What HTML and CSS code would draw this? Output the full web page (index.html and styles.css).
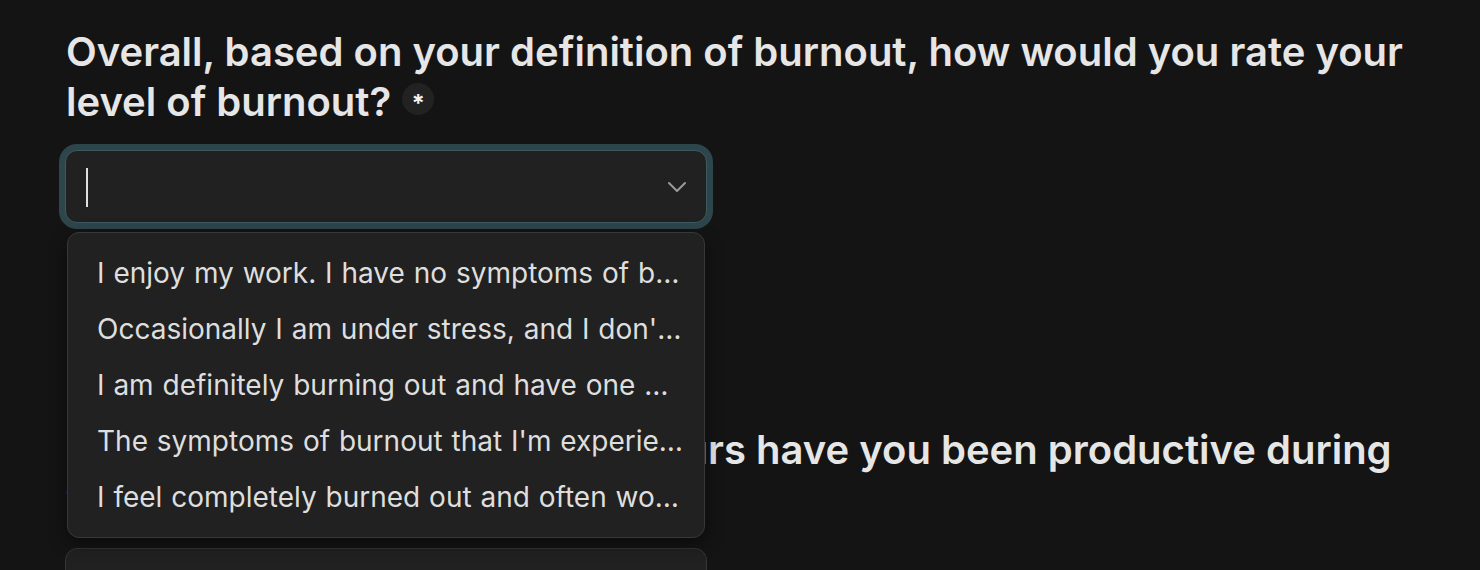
FILE: index.html
```html
<!DOCTYPE html>
<html lang="en">
<head>
    <meta charset="UTF-8">
    <title>Burnout survey</title>
    <link rel="stylesheet" href="styles.css">
</head>
<body>
<div id="form">
    <div class="question">
        <h3>Overall, based on your definition of burnout, how would you rate your level of burnout?<span class="required">*</span></h3>
        <div class="select focused">
            <span class="caret"></span>
            <svg class="chevron" width="20" height="12" viewBox="0 0 20 12">
                <path d="M2 2 L10 10 L18 2" fill="none" stroke="#9a9a9a" stroke-width="2" stroke-linecap="round" stroke-linejoin="round"/>
            </svg>
            <ul class="menu">
                <li>I enjoy my work. I have no symptoms of burnout.</li>
                <li>Occasionally I am under stress, and I don't always have as much energy as I once did, but I don't feel burned out.</li>
                <li>I am definitely burning out and have one or more symptoms of burnout, such as physical and emotional exhaustion.</li>
                <li>The symptoms of burnout that I'm experiencing won't go away. I think about frustration at work a lot.</li>
                <li>I feel completely burned out and often wonder if I can go on. I am at the point where I may need some changes or may need to seek some sort of help.</li>
            </ul>
        </div>
    </div>
    <div class="question">
        <h3>In the past 7 days, how many hours have you been productive during work?</h3>
        <div class="select"></div>
    </div>
</div>
</body>
</html>
```

FILE: styles.css
```css
html * {
    box-sizing: border-box;
}

body {
    margin: 0;
    background: #141414;
    color: #e6e6e6;
    font-family: Inter, "Noto Sans", sans-serif;
}

#form {
    padding: 27px 66px;
}

.question {
    margin-bottom: 202px;
}

.question h3 {
    margin: 0 0 23px;
    font-size: 40px;
    font-weight: 600;
    line-height: 50px;
    color: #e6e6e6;
}

.required {
    display: inline-flex;
    align-items: center;
    justify-content: center;
    width: 32px;
    height: 32px;
    margin-left: 11px;
    border-radius: 50%;
    background: #222;
    color: #f2f2f2;
    font-size: 24px;
    font-weight: 700;
    line-height: 1;
    padding-top: 10px;
    vertical-align: 4px;
}

.select {
    position: relative;
    width: 642px;
    height: 73px;
    margin-left: -1px;
    border: 1px solid #353535;
    border-radius: 12px;
    background: #212121;
}

.select.focused {
    border-color: #3e5a61;
    box-shadow: 0 0 0 6px #2d464c;
}

.caret {
    position: absolute;
    left: 20px;
    top: 17px;
    width: 2px;
    height: 39px;
    background: #e0e0e0;
}

.chevron {
    position: absolute;
    right: 19px;
    top: 30px;
}

.menu {
    position: absolute;
    left: 1px;
    right: 1px;
    top: 81px;
    margin: 0;
    padding: 12px 0;
    list-style: none;
    background: #212121;
    border: 1px solid #383838;
    border-radius: 12px;
    box-shadow: 0 6px 18px rgba(0, 0, 0, 0.45);
    z-index: 2;
}

.menu li {
    padding: 0 20px 0 29px;
    height: 56px;
    line-height: 56px;
    font-size: 28px;
    word-spacing: 1px;
    color: #dedede;
    white-space: nowrap;
    overflow: hidden;
    text-overflow: ellipsis;
}
```
